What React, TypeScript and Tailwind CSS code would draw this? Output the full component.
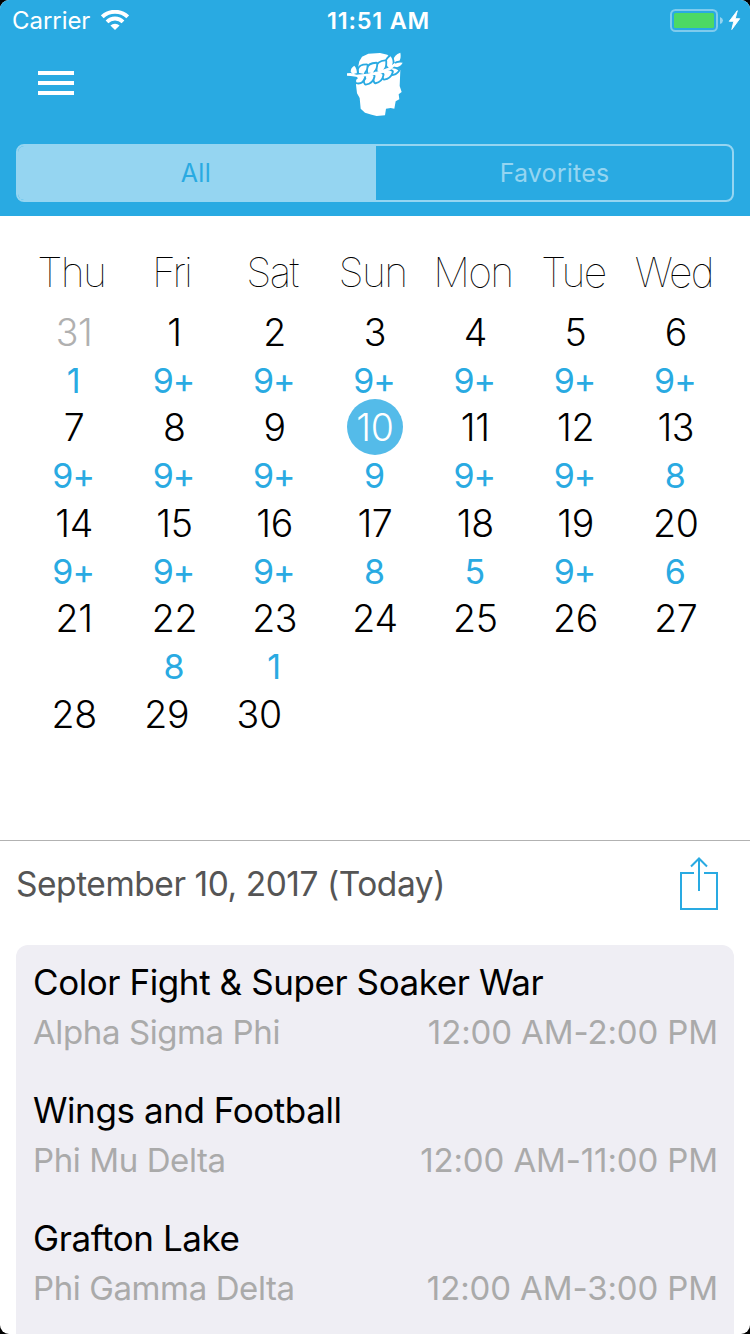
import React from "react";

type Day = { day: string; count?: string; muted?: boolean; selected?: boolean };
type EventItem = { title: string; host: string; time: string };

const weekdays = ["Thu", "Fri", "Sat", "Sun", "Mon", "Tue", "Wed"];

const weeks: Day[][] = [
  [
    { day: "31", count: "1", muted: true },
    { day: "1", count: "9+" },
    { day: "2", count: "9+" },
    { day: "3", count: "9+" },
    { day: "4", count: "9+" },
    { day: "5", count: "9+" },
    { day: "6", count: "9+" },
  ],
  [
    { day: "7", count: "9+" },
    { day: "8", count: "9+" },
    { day: "9", count: "9+" },
    { day: "10", count: "9", selected: true },
    { day: "11", count: "9+" },
    { day: "12", count: "9+" },
    { day: "13", count: "8" },
  ],
  [
    { day: "14", count: "9+" },
    { day: "15", count: "9+" },
    { day: "16", count: "9+" },
    { day: "17", count: "8" },
    { day: "18", count: "5" },
    { day: "19", count: "9+" },
    { day: "20", count: "6" },
  ],
  [
    { day: "21" },
    { day: "22", count: "8" },
    { day: "23", count: "1" },
    { day: "24" },
    { day: "25" },
    { day: "26" },
    { day: "27" },
  ],
];

const rowHeights = ["h-[95px]", "h-[96px]", "h-[95px]", "h-[96px]"];

const lastWeek: Day[] = [{ day: "28" }, { day: "29" }, { day: "30" }];

const events: EventItem[] = [
  { title: "Color Fight & Super Soaker War", host: "Alpha Sigma Phi", time: "12:00 AM-2:00 PM" },
  { title: "Wings and Football", host: "Phi Mu Delta", time: "12:00 AM-11:00 PM" },
  { title: "Grafton Lake", host: "Phi Gamma Delta", time: "12:00 AM-3:00 PM" },
];

function WifiIcon() {
  return (
    <svg className="ml-[11px] mt-[10px] h-[20px] w-[28px]" viewBox="0 0 28 20" fill="none" stroke="#fff">
      <path d="M1.3 6.8 A18.6 18.6 0 0 1 26.7 6.8" strokeWidth="4" />
      <path d="M6 11.8 A11.3 11.3 0 0 1 22 11.8" strokeWidth="3.8" />
      <path d="M9.4 15.6 A6.4 6.4 0 0 1 18.6 15.6 L14 20 Z" fill="#fff" stroke="none" />
    </svg>
  );
}

function BatteryIcon() {
  return (
    <svg className="h-[24px] w-[72px]" viewBox="0 0 72 24">
      <rect x="1" y="1" width="46" height="21" rx="4.5" fill="none" stroke="#7fcbed" strokeWidth="2" />
      <rect x="4" y="4" width="40" height="15" rx="1.5" fill="#4cd964" />
      <path d="M50 8 Q53 9.3 53 11.5 Q53 13.8 50 15 Z" fill="#94d4f0" />
      <path d="M67.3 1.7 L59.3 12.3 H63.8 L61.8 20.5 L69.7 9.7 H65.2 Z" fill="#fff" stroke="#fff" strokeWidth="0.9" strokeLinejoin="round" />
    </svg>
  );
}

function LaurelHead() {
  return (
    <svg className="h-[80px] w-[90px]" viewBox="0 0 270 240">
      <path
        d="M78 122 L81 148 L89 162 L92 194 L105 206 L125 212 L140 216 L165 214 L168 194 L182 192 L193 194 L197 172 L208 166 L206 151 L215 144 L209 126 L211 79 L186 45 L172 32 L150 27 L115 29 L96 38 L88 52 L80 90 Z"
        fill="#fff"
      />
      <path d="M76 98 L110 104 L150 96 L192 74" fill="none" stroke="#29aae2" strokeWidth="18" />
      <g fill="#fff" stroke="#29aae2" strokeWidth="11" strokeLinejoin="round" paintOrder="stroke">
        <path d="M211 26 Q192 33 190 48 L192 63 L205 57 Q215 42 211 26 Z" />
        <path d="M182 37 Q168 47 169 60 L178 77 L187 69 Q191 50 182 37 Z" />
        <path d="M166 52 Q144 54 141 69 Q141 80 148 92 Q160 84 161 75 Q167 70 166 52 Z" />
        <path d="M139 59 Q116 60 113 74 Q112 84 119 96 Q130 89 132 80 Q139 74 139 59 Z" />
        <path d="M110 64 Q89 64 86 77 Q85 87 92 98 Q103 90 104 83 Q110 78 110 64 Z" />
        <path d="M73 65 Q62 71 62 83 L73 97 L80 89 Q82 75 73 65 Z" />
        <path d="M192 62 Q203 53 218 56 Q211 70 193 71 Z" />
        <path d="M173 77 Q190 68 205 79 Q197 92 179 91 Z" />
        <path d="M158 84 Q175 76 186 83 Q180 102 162 104 Q157 98 162 93 Z" />
        <path d="M132 91 Q150 84 158 92 Q154 112 136 115 Q130 107 136 100 Z" />
        <path d="M106 95 Q122 88 131 96 Q127 117 107 119 Q101 111 109 104 Z" />
        <path d="M76 94 Q95 89 103 98 Q97 119 79 115 Q76 107 84 103 Z" />
      </g>
      <path d="M51 88 L62 87 L80 92 L112 89 L145 82 L175 71 L195 56 L198 62 L181 78 L150 90 L112 97 L78 98 L62 96 L51 95 Z" fill="#fff" />
    </svg>
  );
}

function ShareIcon() {
  return (
    <svg className="h-[54px] w-[40px]" viewBox="0 0 40 54" fill="none" stroke="#29aae2" strokeWidth="2">
      <path d="M15 16 H2 V52 H38 V16 H25" />
      <path d="M20 34 V1.5" />
      <path d="M12 9.5 L20 1.5 L28 9.5" />
    </svg>
  );
}

function DayCell({ item }: { item: Day }) {
  const color = item.selected ? "text-white" : item.muted ? "text-[#b0b0b0]" : "text-black";
  return (
    <div className="flex h-full flex-col items-center">
      <div
        className={`h-[56px] w-[56px] shrink-0 rounded-full text-center text-[37.5px] leading-[58px] font-light tracking-[-0.3px] ${color} ${item.selected ? "bg-[#54bbe9]" : ""}`}
      >
        {item.day}
      </div>
      <div className="pr-[2px] text-[34px] leading-[41px] font-normal tracking-[-1px] text-[#29aae2] [font-feature-settings:'calt'_0]">
        {item.count}
      </div>
    </div>
  );
}

export default function App() {
  return (
    <div className="h-[1334px] w-[750px] overflow-hidden bg-black font-['Inter','Noto_Sans',sans-serif]">
      <div className="flex h-full flex-col overflow-hidden rounded-[9px] bg-white">
        <header className="flex h-[216px] shrink-0 flex-col bg-[#29aae2]">
          <div className="grid h-[40px] grid-cols-3 text-white">
            <div className="flex pl-[12px]">
              <span className="text-[24px] leading-[42px] tracking-[-0.05px]">Carrier</span>
              <WifiIcon />
            </div>
            <div className="pl-[7px] text-center text-[23.5px] leading-[42px] font-semibold tracking-[0.8px]">11:51 AM</div>
            <div className="flex justify-end pt-[9px] pr-[8px]">
              <BatteryIcon />
            </div>
          </div>
          <div className="grid h-[104px] grid-cols-3">
            <div className="flex flex-col gap-[6px] pt-[31px] pl-[38px]">
              <span className="h-[4px] w-[36px] bg-white" />
              <span className="h-[4px] w-[36px] bg-white" />
              <span className="h-[4px] w-[36px] bg-white" />
            </div>
            <div className="flex justify-center pt-[4px]">
              <LaurelHead />
            </div>
          </div>
          <div className="mx-[16px] flex h-[58px] overflow-hidden rounded-[8px] border-2 border-[#95d5f1] text-[25px] leading-[54px]">
            <div className="w-[358px] bg-[#95d5f1] pr-[2px] text-center tracking-[0.4px] text-[#29aae2]">All</div>
            <div className="flex-1 pl-[1px] text-center tracking-[0.2px] text-[#95d5f1]">Favorites</div>
          </div>
        </header>

        <section className="flex h-[625px] shrink-0 flex-col border-b border-[#b2b2b2] px-[24px]">
          <div className="-ml-[3px] grid grid-cols-7 pt-[30px] pr-[2px] text-center text-[41px] leading-[52px] font-thin tracking-[-1.7px] text-black">
            {weekdays.map((name) => (
              <span key={name}>{name}</span>
            ))}
          </div>
          <div className="mt-[6px] flex flex-col">
            {weeks.map((week, i) => (
              <div key={i} className={`grid grid-cols-7 ${rowHeights[i]}`}>
                {week.map((item) => (
                  <DayCell key={item.day} item={item} />
                ))}
              </div>
            ))}
            <div className="flex h-[95px] pl-[4px]">
              {lastWeek.map((item) => (
                <div key={item.day} className="w-[92.5px]">
                  <DayCell item={item} />
                </div>
              ))}
            </div>
          </div>
        </section>

        <section className="flex min-h-0 flex-1 flex-col px-[16px]">
          <div className="flex h-[104px] shrink-0 justify-between pr-[15px]">
            <h2 className="text-[33.5px] leading-[87px] tracking-[-0.46px] whitespace-nowrap text-[#555]">
              September 10, 2017 (Today)
            </h2>
            <div className="pt-[16px]">
              <ShareIcon />
            </div>
          </div>
          <div className="flex-1 overflow-hidden rounded-t-[12px] bg-[#efeef4] px-[17px]">
            {events.map((event) => (
              <div key={event.title} className="h-[128px] pt-[12px] whitespace-nowrap">
                <div className="text-[35px] leading-[50px] tracking-[-0.42px] text-black">{event.title}</div>
                <div className="flex justify-between text-[33px] leading-[50px] text-[#aaa]">
                  <span className="tracking-[-0.4px]">{event.host}</span>
                  <span className="mr-[-1px] tracking-[-0.12px]">{event.time}</span>
                </div>
              </div>
            ))}
          </div>
        </section>
      </div>
    </div>
  );
}
